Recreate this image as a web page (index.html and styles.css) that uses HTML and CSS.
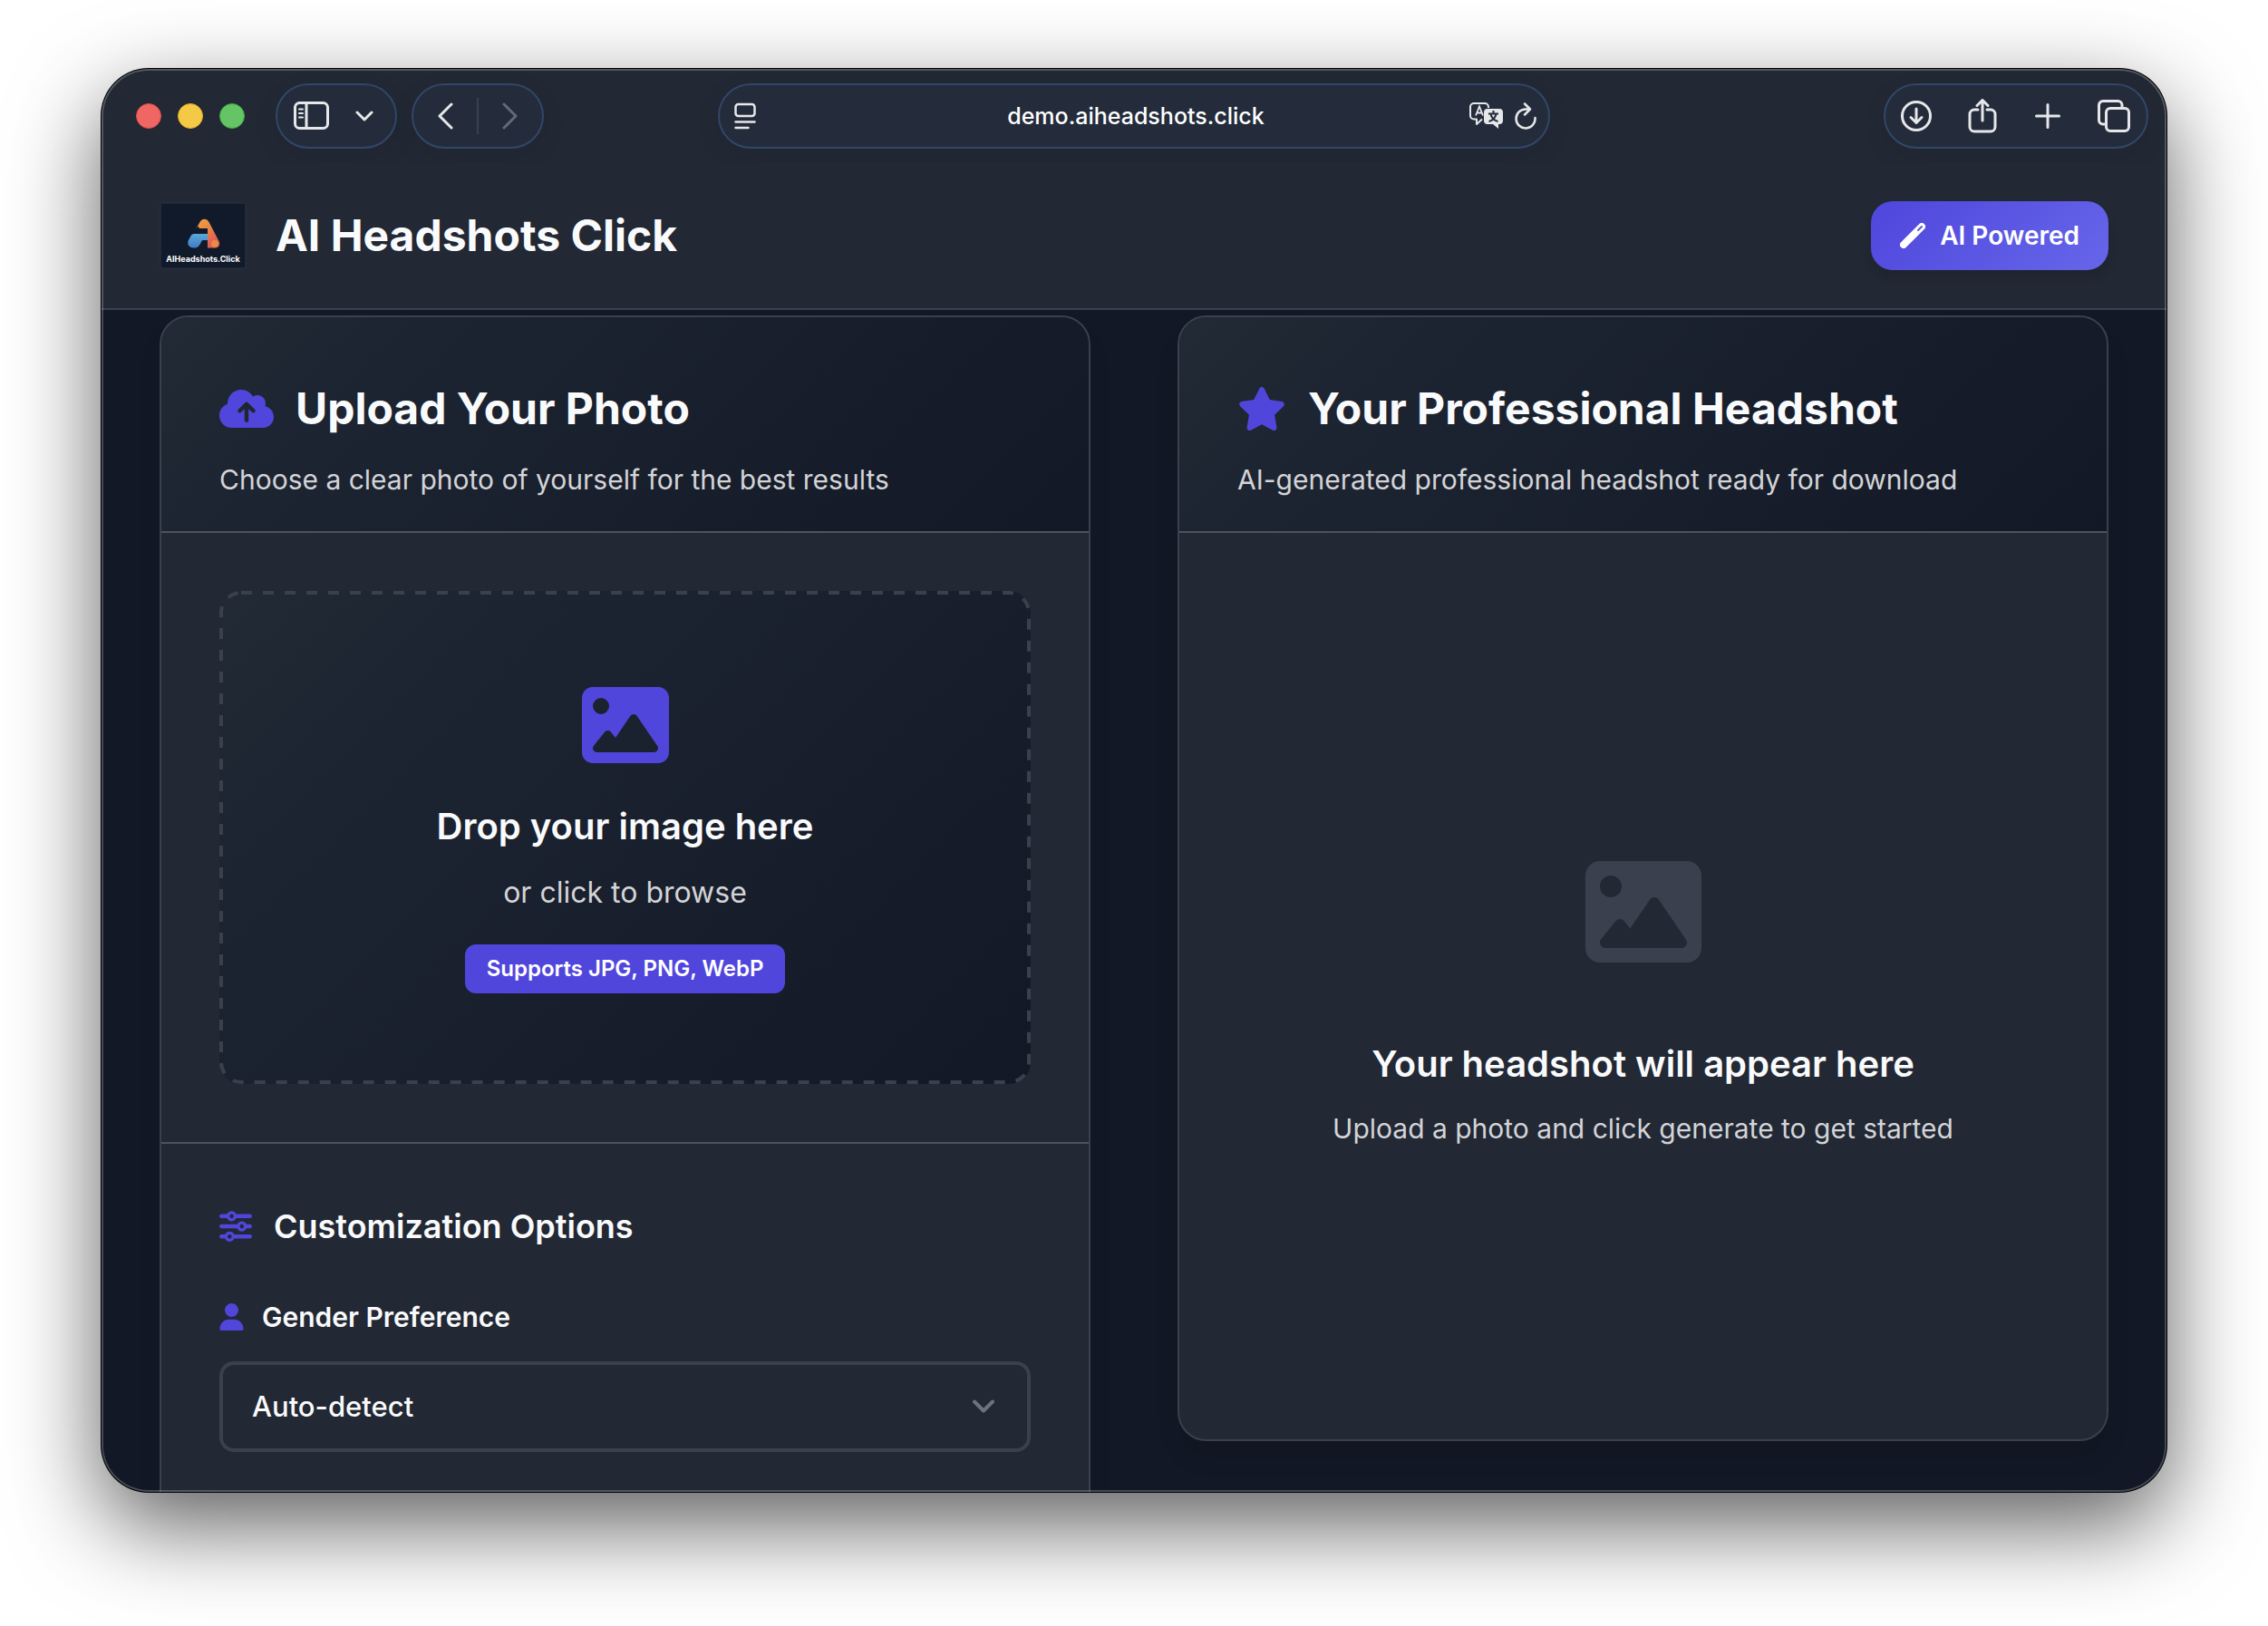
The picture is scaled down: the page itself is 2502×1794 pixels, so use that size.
FILE: index.html
```html
<!DOCTYPE html>
<html lang="en">
<head>
<meta charset="utf-8">
<meta name="viewport" content="width=device-width, initial-scale=1">
<title>AI Headshots Click</title>
<link rel="stylesheet" href="styles.css">
</head>
<body>
<div class="window">
  <div class="toolbar">
    <div class="toolbar-side">
      <div class="lights">
        <span class="light light-close"></span>
        <span class="light light-min"></span>
        <span class="light light-max"></span>
      </div>
      <div class="pill pill-sidebar">
        <button class="tool" aria-label="Show sidebar">
          <svg width="40" height="32" viewBox="0 0 40 32" class="line"><rect x="1.500" y="1.500" width="36" height="28" rx="5"/><path d="M14 2v27"/><path d="M6 8.500h4M6 13h4M6 17.500h4" stroke-width="2"/></svg>
        </button>
        <button class="tool" aria-label="Tab groups">
          <svg width="20" height="14" viewBox="0 0 20 14" class="line"><path d="M2 3l8 8 8-8"/></svg>
        </button>
      </div>
      <div class="pill pill-nav">
        <button class="tool" aria-label="Back">
          <svg width="20" height="30" viewBox="0 0 20 30" class="line"><path d="M16 2L3 15l13 13"/></svg>
        </button>
        <span class="split"></span>
        <button class="tool dim" aria-label="Forward">
          <svg width="20" height="30" viewBox="0 0 20 30" class="line"><path d="M4 2l13 13L4 28"/></svg>
        </button>
      </div>
    </div>
    <div class="pill pill-url">
      <button class="tool" aria-label="Page menu">
        <svg width="24" height="30" viewBox="0 0 24 30" class="line thin"><rect x="1.500" y="2" width="21" height="13" rx="3"/><path d="M1.500 21.500h21M1.500 28h14"/></svg>
      </button>
      <span class="url">demo.aiheadshots.click</span>
      <span class="url-tools">
        <button class="tool" aria-label="Translate">
          <svg width="40" height="32" viewBox="0 0 40 32"><path d="M15 19.500L9 25v-5.500H6a4 4 0 0 1-4-4V6a4 4 0 0 1 4-4h12a4 4 0 0 1 4 4v1" fill="none" stroke="currentColor" stroke-width="2" stroke-linejoin="round"/><path d="M8 15.500L12 5.500l4 10M9.500 12.500h5" fill="none" stroke="currentColor" stroke-width="1.800"/><path d="M21 8h13a4 4 0 0 1 4 4v9a4 4 0 0 1-4 4h-1v5l-6-5h-6a4 4 0 0 1-4-4v-9a4 4 0 0 1 4-4z" fill="currentColor"/><path d="M27.500 10v3M22 13.500h11M24.500 14c1 4 4 7 8 8M30.500 14c-1 4-4 7-8 8" fill="none" stroke="#242c3c" stroke-width="2"/></svg>
        </button>
        <button class="tool" aria-label="Reload">
          <svg width="26" height="30" viewBox="0 0 26 30" class="line thin"><path d="M17.500 7.500H13A10.500 10.500 0 1 0 23.500 17M12 1.500l6 6-6 6"/></svg>
        </button>
      </span>
    </div>
    <div class="toolbar-side end">
      <div class="pill pill-actions">
        <button class="tool" aria-label="Downloads">
          <svg width="36" height="38" viewBox="0 0 36 38" class="line"><circle cx="18" cy="19" r="15.500"/><path d="M18 11v15M12 20.500l6 6 6-6"/></svg>
        </button>
        <button class="tool" aria-label="Share">
          <svg width="36" height="38" viewBox="-2 0 36 38" class="line"><path d="M11 12H7a5 5 0 0 0-5 5v14a5 5 0 0 0 5 5h18a5 5 0 0 0 5-5V17a5 5 0 0 0-5-5h-4M16 24V2M10 7.500L16 1.500l6 6"/></svg>
        </button>
        <button class="tool" aria-label="New tab">
          <svg width="36" height="28" viewBox="-4 0 36 28" class="line"><path d="M14 1.500v25M1.500 14h25"/></svg>
        </button>
        <button class="tool" aria-label="Show tabs">
          <svg width="36" height="36" viewBox="0 0 36 36" class="line"><rect x="9.500" y="9.500" width="25" height="25" rx="4.500"/><path d="M9 27H6a4.500 4.500 0 0 1-4.500-4.500V6A4.500 4.500 0 0 1 6 1.500h16.500A4.500 4.500 0 0 1 27 6v3"/></svg>
        </button>
      </div>
    </div>
  </div>

  <header class="site-header">
    <div class="brand">
      <svg class="logo" width="96" height="74" viewBox="0 0 96 74" role="img" aria-label="AI Headshots Click logo">
        <defs>
          <linearGradient id="warm" x1="0" y1="0" x2="0.500" y2="1"><stop offset="0" stop-color="#f2a541"/><stop offset="0.500" stop-color="#e88348"/><stop offset="1" stop-color="#dc5a58"/></linearGradient>
          <linearGradient id="cool" x1="0" y1="0" x2="0" y2="1"><stop offset="0" stop-color="#5aa9dc"/><stop offset="1" stop-color="#3f7cc4"/></linearGradient>
        </defs>
        <rect x="1" y="1" width="94" height="72" rx="2" fill="#111a2b" stroke="#2b3442"/>
        <path d="M38 35h15v7h-5c-3 0-2 8.500-10 8.500-6 0-8-4.500-6-8.500l3-5.500q1-1.500 3-1.500z" fill="url(#cool)"/>
        <path d="M40 30l4.500-8c2-4.500 8-4.500 10 0l11 21c2 4-.5 7.500-4 7.500H53V29H44l-1.500-2.500z" fill="url(#warm)"/>
        <circle cx="61" cy="46" r="4" fill="#ea8a45"/>
        <text x="48" y="66" text-anchor="middle" class="logo-text">AIHeadshots.Click</text>
      </svg>
      <h1 class="site-title">AI Headshots Click</h1>
    </div>
    <div class="powered">
      <svg width="28" height="28" viewBox="0 0 28 28"><path d="M4 24L24 4" stroke="#fff" stroke-width="8" stroke-linecap="round"/><path d="M20 8l4-4" stroke="#5a54e0" stroke-width="2" stroke-linecap="round"/></svg>
      <span>AI Powered</span>
    </div>
  </header>

  <main class="content">
    <section class="card">
      <div class="card-header">
        <h2 class="card-title">
          <svg class="accent" width="60" height="48" viewBox="0 0 640 512"><path d="M144 480C64.500 480 0 415.500 0 336c0-62.800 40.200-116.200 96.200-135.900c-.1-2.700-.2-5.400-.2-8.100c0-88.400 71.600-160 160-160c59.300 0 111 32.200 138.700 80.200C409.900 102 428.300 96 448 96c53 0 96 43 96 96c0 12.200-2.300 23.800-6.400 34.600C596 238.400 640 290.100 640 352c0 70.700-57.300 128-128 128H144zm79-217c-9.400 9.400-9.400 24.600 0 33.900s24.600 9.400 33.900 0l39-39V392c0 13.300 10.700 24 24 24s24-10.700 24-24V257.900l39 39c9.400 9.400 24.600 9.400 33.900 0s9.400-24.600 0-33.900l-80-80c-9.400-9.400-24.600-9.400-33.900 0l-80 80z"/></svg>
          Upload Your Photo
        </h2>
        <p class="text">Choose a clear photo of yourself for the best results</p>
      </div>
      <div class="card-body">
        <button class="drop-zone">
          <svg class="dashes" aria-hidden="true"><rect class="dash-rect" x="2" y="2" rx="22"/></svg>
          <svg class="accent" width="96" height="96" viewBox="0 0 512 512"><path d="M0 96C0 60.700 28.700 32 64 32H448c35.300 0 64 28.700 64 64V416c0 35.300-28.700 64-64 64H64c-35.300 0-64-28.700-64-64V96zM323.800 202.500c-4.500-6.600-11.900-10.500-19.800-10.500s-15.400 3.900-19.800 10.500l-87 127.600L170.700 297c-4.600-5.700-11.500-9-18.700-9s-14.200 3.300-18.700 9l-64 80c-5.800 7.200-6.900 17.100-2.900 25.400s12.400 13.600 21.600 13.600h336c8.900 0 17.100-4.900 21.200-12.800s3.600-17.400-1.400-24.700l-120-176zM112 192a48 48 0 1 0 0-96 48 48 0 1 0 0 96z"/></svg>
          <span class="prompt">Drop your image here</span>
          <span class="text large">or click to browse</span>
          <span class="formats">Supports JPG, PNG, WebP</span>
        </button>
      </div>
      <div class="options">
        <h3 class="options-title">
          <svg class="accent" width="36" height="36" viewBox="0 0 512 512"><path d="M0 416c0 17.700 14.300 32 32 32l54.700 0c12.300 28.300 40.500 48 73.300 48s61-19.700 73.300-48L480 448c17.700 0 32-14.300 32-32s-14.300-32-32-32l-246.700 0c-12.300-28.300-40.500-48-73.300-48s-61 19.700-73.300 48L32 384c-17.700 0-32 14.300-32 32zm128 0a32 32 0 1 1 64 0 32 32 0 1 1 -64 0zM320 256a32 32 0 1 1 64 0 32 32 0 1 1 -64 0zm32-80c-32.800 0-61 19.700-73.300 48L32 224c-17.700 0-32 14.300-32 32s14.300 32 32 32l246.700 0c12.300 28.300 40.500 48 73.300 48s61-19.700 73.300-48l54.700 0c17.700 0 32-14.300 32-32s-14.300-32-32-32l-54.700 0c-12.300-28.300-40.500-48-73.300-48zM192 128a32 32 0 1 1 0-64 32 32 0 1 1 0 64zm73.300-64C253 35.700 224.800 16 192 16s-61 19.700-73.300 48L32 64C14.300 64 0 78.300 0 96s14.300 32 32 32l86.700 0c12.300 28.300 40.500 48 73.300 48s61-19.700 73.300-48L480 128c17.700 0 32-14.300 32-32s-14.300-32-32-32L265.300 64z"/></svg>
          Customization Options
        </h3>
        <label class="field-label" for="gender">
          <svg class="accent" width="27" height="30" viewBox="0 0 448 512"><path d="M224 256A128 128 0 1 0 224 0a128 128 0 1 0 0 256zm-45.700 48C79.800 304 0 383.800 0 482.300C0 498.700 13.300 512 29.700 512H418.300c16.400 0 29.700-13.300 29.700-29.700C448 383.800 368.200 304 269.700 304H178.300z"/></svg>
          Gender Preference
        </label>
        <div class="select-wrap">
          <select id="gender" class="select">
            <option>Auto-detect</option>
          </select>
          <svg class="caret" width="24" height="16" viewBox="0 0 24 16"><path d="M2 2.500l10 10 10-10"/></svg>
        </div>
      </div>
    </section>

    <section class="card">
      <div class="card-header">
        <h2 class="card-title">
          <svg class="accent" width="54" height="48" viewBox="0 0 576 512"><path d="M316.900 18C311.600 7 300.400 0 288.100 0s-23.400 7-28.800 18L195 150.300 51.400 171.500c-12 1.800-22 10.200-25.700 21.700s-.7 24.200 7.900 32.700L137.800 329 113.200 474.700c-2 12 3 24.200 12.900 31.300s23 8 33.800 2.300l128.300-68.500 128.300 68.500c10.800 5.700 23.900 4.900 33.800-2.300s14.900-19.300 12.900-31.300L438.500 329 542.700 225.900c8.600-8.500 11.700-21.200 7.900-32.700s-13.700-19.900-25.700-21.700L381.200 150.300 316.900 18z"/></svg>
          Your Professional Headshot
        </h2>
        <p class="text">AI-generated professional headshot ready for download</p>
      </div>
      <div class="empty">
        <svg class="muted" width="128" height="128" viewBox="0 0 512 512"><path d="M0 96C0 60.700 28.700 32 64 32H448c35.300 0 64 28.700 64 64V416c0 35.300-28.700 64-64 64H64c-35.300 0-64-28.700-64-64V96zM323.800 202.500c-4.500-6.600-11.900-10.500-19.800-10.500s-15.400 3.900-19.800 10.500l-87 127.600L170.700 297c-4.600-5.700-11.500-9-18.700-9s-14.200 3.300-18.700 9l-64 80c-5.800 7.200-6.900 17.100-2.900 25.400s12.400 13.600 21.600 13.600h336c8.900 0 17.100-4.900 21.200-12.800s3.600-17.400-1.400-24.700l-120-176zM112 192a48 48 0 1 0 0-96 48 48 0 1 0 0 96z"/></svg>
        <h3 class="prompt">Your headshot will appear here</h3>
        <p class="text">Upload a photo and click generate to get started</p>
      </div>
    </section>
  </main>
</div>
</body>
</html>
```
FILE: styles.css
```css
:root {
  --surface: #222834;
  --page: #121825;
  --border: #3a404e;
  --divider: #4d5461;
  --accent: #5046dc;
  --text: #f9fafb;
  --text-soft: #d3d4d7;
  --fade: linear-gradient(135deg, #212a35, #1e2532 20%, #121825);
}

* {
  box-sizing: border-box;
  margin: 0;
}

body {
  height: 100vh;
  padding: 76px 112px 148px;
  background: #fff;
  color: var(--text);
  font-family: Inter, "Liberation Sans", sans-serif;
  overflow: hidden;
}

button {
  padding: 0;
  border: 0;
  background: none;
  color: inherit;
  font: inherit;
}

svg {
  display: block;
  flex: none;
}

.window {
  position: relative;
  display: flex;
  flex-direction: column;
  height: 100%;
  border-radius: 52px;
  background: var(--page);
  box-shadow: 0 0 0 1px #000, 0 36px 100px rgba(0, 0, 0, 0.64);
  overflow: hidden;
}

/* light rim drawn over the window's own content */
.window::after {
  content: "";
  position: absolute;
  inset: 0;
  border: 2px solid rgba(255, 255, 255, 0.22);
  border-radius: 52px;
  pointer-events: none;
}

.toolbar {
  display: grid;
  grid-template-columns: 1fr minmax(0, 918px) 1fr;
  align-items: center;
  padding: 16px 20px;
  background: var(--surface);
}

.toolbar-side {
  display: flex;
  align-items: center;
  gap: 16px;
}

.end {
  justify-content: flex-end;
}

.lights {
  display: flex;
  gap: 18px;
  padding: 0 18px;
}

.light {
  width: 28px;
  height: 28px;
  border: 1px solid;
  border-radius: 50%;
}

.light-close { background: #ee6764; border-color: #e04a45; }
.light-min { background: #f4c945; border-color: #dfaf22; }
.light-max { background: #65c466; border-color: #3fae3d; }

.pill {
  display: flex;
  align-items: center;
  justify-content: space-between;
  height: 72px;
  border: 2px solid #314669;
  border-radius: 36px;
  background: #242c3c;
  color: #e6e7e9;
  box-shadow: 0 8px 32px rgba(0, 0, 0, 0.06);
}

.pill-sidebar { width: 134px; padding: 0 24px 0 18px; }
.pill-nav { width: 146px; padding: 0 26px; }
.pill-actions { width: 292px; padding: 0 18px 0 16px; }

.pill-url {
  display: grid;
  grid-template-columns: 1fr auto 1fr;
  padding: 0 12px 0 16px;
}

.line {
  fill: none;
  stroke: currentColor;
  stroke-width: 3;
  stroke-linecap: round;
  stroke-linejoin: round;
}

.thin {
  stroke-width: 2.5;
}

.dim {
  color: #626978;
}

.tool {
  display: flex;
}

.split {
  width: 2px;
  height: 40px;
  background: #3a4252;
}

.url {
  font-size: 25px;
  line-height: 32px;
  font-weight: 500;
  color: #fff;
}

.url-tools {
  display: flex;
  align-items: center;
  justify-content: flex-end;
  gap: 10px;
}

.site-header {
  display: flex;
  align-items: center;
  justify-content: space-between;
  padding: 42px 64px;
  border-bottom: 2px solid var(--border);
  background: var(--surface);
}

.brand {
  display: flex;
  align-items: center;
  gap: 32px;
}

.logo-text {
  fill: #fff;
  font-size: 9px;
  font-weight: 700;
}

.site-title {
  font-size: 48px;
  line-height: 72px;
  font-weight: 700;
}

.powered {
  display: flex;
  align-items: center;
  gap: 16px;
  height: 76px;
  padding: 0 32px;
  border-radius: 24px;
  background: linear-gradient(135deg, #4f46dc, #6666ea);
  box-shadow: 0 8px 12px rgba(0, 0, 0, 0.1);
  color: #fff;
  font-size: 28px;
  line-height: 44px;
  font-weight: 600;
}

.content {
  display: grid;
  grid-template-columns: 1fr 1fr;
  align-items: start;
  gap: 96px;
  flex: 1;
  min-height: 0;
  padding: 6px 64px 0;
}

.card {
  border: 2px solid var(--border);
  border-radius: 32px;
  background: var(--surface);
  box-shadow: 0 20px 30px -6px rgba(0, 0, 0, 0.12);
  overflow: hidden;
}

.card-header {
  display: flex;
  flex-direction: column;
  gap: 16px;
  padding: 64px 64px 32px;
  border-bottom: 2px solid var(--divider);
  background: var(--fade);
}

.card-title {
  display: flex;
  align-items: center;
  gap: 24px;
  font-size: 48px;
  line-height: 74px;
  font-weight: 700;
}

.accent { fill: var(--accent); }
.muted { fill: var(--border); }

.text {
  color: var(--text-soft);
  font-size: 30px;
  line-height: 50px;
  font-weight: 400;
}

.large {
  font-size: 32px;
}

.card-body {
  padding: 64px;
}

.drop-zone {
  position: relative;
  display: flex;
  flex-direction: column;
  align-items: center;
  width: 100%;
  padding: 100px;
  border-radius: 24px;
  background: var(--fade);
}

/* dashed outline around the drop zone */
.dashes {
  position: absolute;
  inset: 0;
  width: 100%;
  height: 100%;
}

.dash-rect {
  width: calc(100% - 4px);
  height: calc(100% - 4px);
  fill: none;
  stroke: var(--border);
  stroke-width: 4;
  stroke-dasharray: 12 12;
}

.prompt {
  font-size: 40px;
  line-height: 64px;
  font-weight: 600;
}

.drop-zone .prompt {
  margin: 32px 0 16px;
}

.formats {
  margin-top: 32px;
  padding: 8px 24px;
  border-radius: 12px;
  background: var(--accent);
  color: #fff;
  font-size: 24px;
  line-height: 38px;
  font-weight: 600;
}

.options {
  display: flex;
  flex-direction: column;
  padding: 64px 64px 96px;
  border-top: 2px solid var(--divider);
}

.options-title {
  display: flex;
  align-items: center;
  gap: 24px;
  margin-bottom: 48px;
  font-size: 36px;
  line-height: 54px;
  font-weight: 600;
}

.field-label {
  display: flex;
  align-items: center;
  gap: 20px;
  margin-bottom: 24px;
  font-size: 30px;
  line-height: 50px;
  font-weight: 600;
}

.select-wrap {
  display: grid;
  align-items: center;
}

.select-wrap > * {
  grid-area: 1 / 1;
}

.select {
  appearance: none;
  width: 100%;
  height: 100px;
  padding: 0 32px;
  border: 4px solid var(--border);
  border-radius: 16px;
  background: var(--surface);
  color: var(--text);
  font: 500 31px/48px Inter, "Liberation Sans", sans-serif;
}

.caret {
  justify-self: end;
  margin-right: 40px;
  fill: none;
  stroke: #6b7280;
  stroke-width: 4;
  stroke-linecap: round;
  stroke-linejoin: round;
  pointer-events: none;
}

.empty {
  display: flex;
  flex-direction: column;
  align-items: center;
  padding: 354px 64px 318px;
  text-align: center;
}

.empty .prompt {
  margin: 72px 0 14px;
}
```
